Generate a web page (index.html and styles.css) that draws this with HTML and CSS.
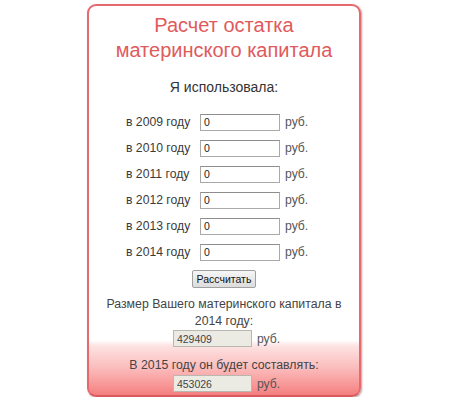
FILE: index.html
```
<!DOCTYPE html>
<html lang="ru">
<head>
<meta charset="utf-8">
<link rel="stylesheet" href="styles.css">
</head>
<body>
<div class="card">
  <h1 class="title">Расчет остатка<br>материнского капитала</h1>
  <div class="subtitle">Я использовала:</div>
  <div class="rows">
    <div class="row"><span class="lbl">в 2009 году</span><input class="inp" type="text" value="0"><span class="cur">руб.</span></div>
    <div class="row"><span class="lbl">в 2010 году</span><input class="inp" type="text" value="0"><span class="cur">руб.</span></div>
    <div class="row"><span class="lbl">в 2011 году</span><input class="inp" type="text" value="0"><span class="cur">руб.</span></div>
    <div class="row"><span class="lbl">в 2012 году</span><input class="inp" type="text" value="0"><span class="cur">руб.</span></div>
    <div class="row"><span class="lbl">в 2013 году</span><input class="inp" type="text" value="0"><span class="cur">руб.</span></div>
    <div class="row"><span class="lbl">в 2014 году</span><input class="inp" type="text" value="0"><span class="cur">руб.</span></div>
  </div>
  <button class="btn" type="button">Рассчитать</button>
  <div class="result">Размер Вашего материнского капитала в<br>2014 году:</div>
  <div class="resrow"><input class="inp out" type="text" value="429409" readonly><span class="cur">руб.</span></div>
  <div class="result second">В 2015 году он будет составлять:</div>
  <div class="resrow last"><input class="inp out" type="text" value="453026" readonly><span class="cur">руб.</span></div>
</div>
</body>
</html>
```
FILE: styles.css
```
html, body {
  margin: 0;
  padding: 0;
  background: #ffffff;
}
body {
  font-family: "Liberation Sans", Arial, sans-serif;
  color: #3a3a3a;
}
.card {
  box-sizing: border-box;
  margin: 4px 0 0 87px;
  width: 274px;
  height: 393px;
  border: 2px solid #e56a6d;
  border-bottom-color: #d85a5e;
  border-radius: 9px;
  box-shadow: 1px 1px 2px rgba(90, 40, 40, 0.45);
  background: linear-gradient(to bottom, #ffffff 0, #ffffff 334px, #fde2e2 340px, #fbbcbc 362px, #f89494 380px, #f47e7e 100%);
  display: flex;
  flex-direction: column;
  align-items: center;
}
.title {
  margin: 7px 0 0;
  font-weight: normal;
  font-size: 20px;
  line-height: 25px;
  color: #e05a5c;
  text-align: center;
}
.subtitle {
  margin-top: 15px;
  font-size: 14px;
  line-height: 18px;
  color: #333;
}
.rows {
  align-self: flex-start;
  margin: 18px 0 0 37px;
  display: flex;
  flex-direction: column;
  gap: 10px;
}
.row {
  display: flex;
  align-items: center;
  height: 16px;
}
.lbl {
  font-size: 12.2px;
  width: 65px;
  white-space: nowrap;
  margin-right: 9px;
}
.inp {
  box-sizing: border-box;
  width: 80px;
  height: 17px;
  padding: 0 3px;
  margin: 0;
  border: 1px solid #a9a9a9;
  border-top-color: #8e8e8e;
  background: #fff;
  font-family: "Liberation Sans", Arial, sans-serif;
  font-size: 10.5px;
  color: #222;
  outline: none;
}
.cur {
  font-size: 12.2px;
  margin-left: 5px;
  color: #555;
}
.btn {
  margin-top: 10px;
  height: 18px;
  padding: 0 4px;
  border: 1px solid #a0a0a0;
  border-radius: 2px;
  background: linear-gradient(#f6f6f6, #dcdcdc);
  font-family: "Liberation Sans", Arial, sans-serif;
  font-size: 10.5px;
  color: #111;
}
.result {
  margin-top: 8px;
  font-size: 12.3px;
  line-height: 17px;
  text-align: center;
  color: #444;
}
.result.second {
  margin-top: 10px;
}
.resrow {
  display: flex;
  align-items: center;
  margin-left: 5px;
}
.resrow.last {
  margin-top: 1px;
}
.out {
  width: 79px;
  background: #ebebe4;
  color: #444;
  border-color: #b8b8b0;
}
```
